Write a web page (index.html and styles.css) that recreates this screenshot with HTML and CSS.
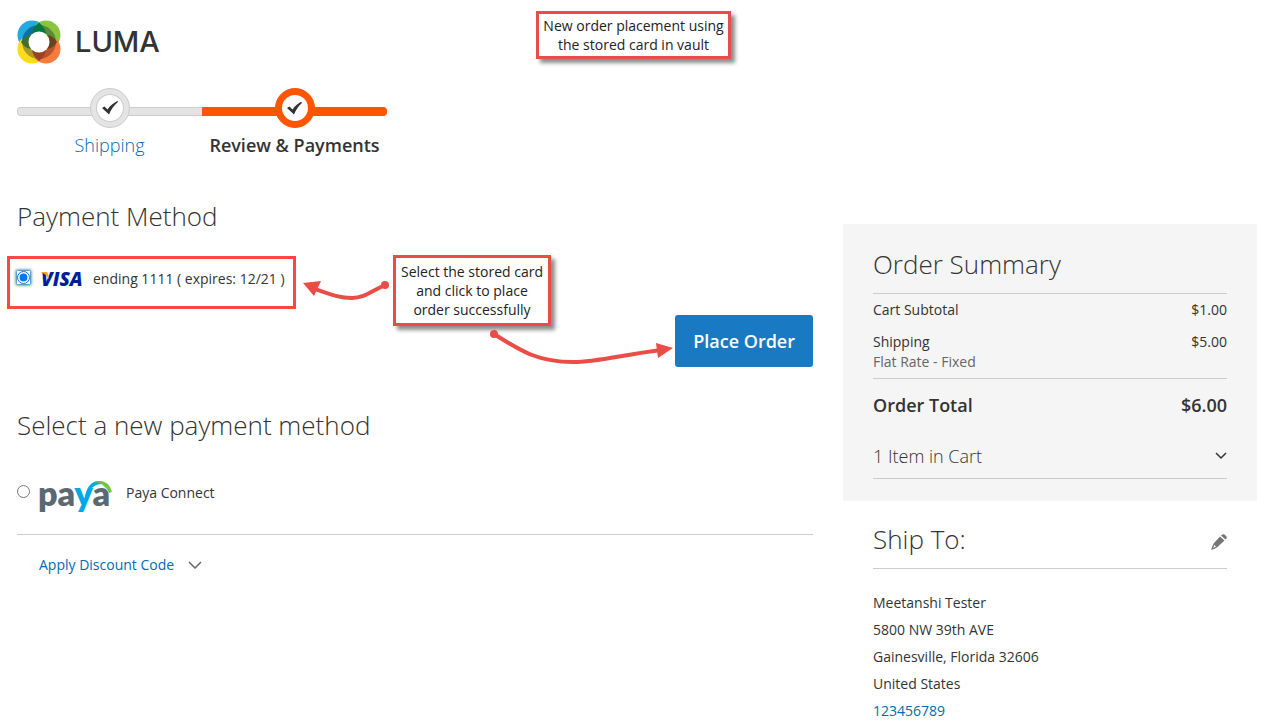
FILE: index.html
```
<!DOCTYPE html>
<html lang="en">
<head>
    <meta charset="UTF-8">
    <meta name="viewport" content="width=device-width, initial-scale=1.0">
    <title>Checkout</title>
    <link rel="stylesheet" href="styles.css">
</head>
<body>
    <header class="header">
        <a class="logo" href="#">
            <svg width="44" height="44" viewBox="0 0 44 44" aria-hidden="true">
                <circle cx="15" cy="15" r="14.5" fill="#26a9e0"/>
                <circle cx="29" cy="15" r="14.5" fill="#8bc540"/>
                <circle cx="15" cy="29" r="14.5" fill="#fedc14"/>
                <circle cx="29" cy="29" r="14.5" fill="#f67b3e"/>
                <path d="M22 5A17 17 0 0 0 5 22H22z" fill="#0c71a0"/>
                <path d="M22 5A17 17 0 0 1 39 22H22z" fill="#5b8a3b"/>
                <path d="M22 39A17 17 0 0 1 5 22H22z" fill="#a99a2e"/>
                <path d="M22 39A17 17 0 0 0 39 22H22z" fill="#b9552e"/>
                <path d="M22 2.500Q29 8 29 16H15Q15 8 22 2.500z" fill="#007a3e"/>
                <path d="M4 22Q8 15 15 15V29Q8 29 4 22z" fill="#42702f"/>
                <path d="M40 22Q36 15 29 15V29Q36 29 40 22z" fill="#65451f"/>
                <path d="M22 41Q29 36 29 28H15Q15 36 22 41z" fill="#9b4225"/>
                <circle cx="22" cy="22" r="10.500" fill="#fff"/>
            </svg>
            <span class="logo-text">LUMA</span>
        </a>
        <p class="callout callout-title">New order placement using<br>the stored card in vault</p>
    </header>

    <ol class="progress">
        <li class="step">
            <span class="step-mark">
                <svg width="18" height="16" viewBox="0 0 18 16" aria-hidden="true"><path d="M1 8L3.500 6.500L6.500 9.500Q10 4 16.500 1L17 2Q11 7 8 14.500z" fill="#333"/></svg>
            </span>
            <a href="#">Shipping</a>
        </li>
        <li class="step active">
            <span class="step-mark">
                <svg width="18" height="16" viewBox="0 0 18 16" aria-hidden="true"><path d="M1 8L3.500 6.500L6.500 9.500Q10 4 16.500 1L17 2Q11 7 8 14.500z" fill="#333"/></svg>
            </span>
            <span>Review &amp; Payments</span>
        </li>
    </ol>

    <div class="checkout">
        <main class="payment">
            <h2>Payment Method</h2>
            <div class="method stored">
                <input type="radio" id="stored" name="payment" checked>
                <label for="stored">
                    <span class="visa">VISA
                        <svg width="10" height="7" viewBox="0 0 10 7" aria-hidden="true"><path d="M0 0H6Q8 0 8 2L9 7Q5 1 0 0z" fill="#f7a51c"/></svg>
                    </span>
                    <span>ending 1111 ( expires: 12/21 )</span>
                </label>
                <span class="highlight"></span>

                <!-- Arrow from the note to the stored card -->
                <svg class="arrow arrow-card" width="90" height="30" viewBox="0 0 90 30" aria-hidden="true">
                    <path d="M10 10C30 17 38 20 50 20S68 14 83 7" fill="none" stroke="#eb4c46" stroke-width="4"/>
                    <path d="M1 5L19 3L12 18z" fill="#eb4c46"/>
                    <circle cx="83" cy="7" r="4" fill="#eb4c46"/>
                </svg>
                <p class="callout callout-card">Select the stored card<br>and click to place<br>order successfully</p>
                <!-- Arrow from the note to the order button -->
                <svg class="arrow arrow-button" width="186" height="40" viewBox="0 0 186 40" aria-hidden="true">
                    <path d="M5 6C33 24 50 34 84 34C108 34 132 27 172 22" fill="none" stroke="#eb4c46" stroke-width="4"/>
                    <path d="M184 20L167 15L169 30z" fill="#eb4c46"/>
                    <circle cx="5" cy="6" r="4" fill="#eb4c46"/>
                </svg>
            </div>
            <div class="actions">
                <button type="button" class="place-order">Place Order</button>
            </div>

            <h2>Select a new payment method</h2>
            <div class="method new-method">
                <input type="radio" id="paya" name="payment">
                <label for="paya">
                    <svg class="paya" width="76" height="40" viewBox="0 0 76 40" role="img" aria-label="paya">
                        <text x="0" y="33" fill="#5a6872">pa<tspan fill="#00a8e6">y</tspan>a</text>
                        <path d="M46 30Q48 9 60 8Q66 8 69 12Q60 9 54 15Q50 21 48 30z" fill="#00a8e6"/>
                        <path d="M56 9Q70 5 74 19L71 20Q67 10 56 9z" fill="#77c143"/>
                    </svg>
                    <span>Paya Connect</span>
                </label>
            </div>
            <a class="discount" href="#">
                Apply Discount Code
                <svg width="14" height="8" viewBox="0 0 14 8" aria-hidden="true"><path d="M1 1L7 7L13 1" fill="none" stroke="#666" stroke-width="1.500"/></svg>
            </a>
        </main>

        <aside class="sidebar">
            <section class="summary">
                <h2>Order Summary</h2>
                <table class="totals">
                    <tr>
                        <th>Cart Subtotal</th>
                        <td>$1.00</td>
                    </tr>
                    <tr class="shipping">
                        <th>Shipping<small>Flat Rate - Fixed</small></th>
                        <td>$5.00</td>
                    </tr>
                    <tr class="grand">
                        <th>Order Total</th>
                        <td>$6.00</td>
                    </tr>
                </table>
                <button type="button" class="cart-items">
                    1 Item in Cart
                    <svg width="12" height="8" viewBox="0 0 12 8" aria-hidden="true"><path d="M1 1L6 6L11 1" fill="none" stroke="#333" stroke-width="1.500"/></svg>
                </button>
            </section>

            <section class="ship-to">
                <div class="ship-title">
                    <h2>Ship To:</h2>
                    <button type="button" class="edit" aria-label="Edit">
                        <svg width="16" height="16" viewBox="0 0 16 16" aria-hidden="true"><path fill="#757575" fill-rule="evenodd" d="M9 2.500L13.500 6.500L6.500 13Q4 15 0 16Q1 12 3 9zM2 14L5 12.500L3.500 11zM10 1.500L11.500.5Q12.500 0 13.500 .5L15.500 2.500Q16 3.500 15.500 4.500L14.500 5.500z"/></svg>
                    </button>
                </div>
                <address>
                    Meetanshi Tester<br>
                    5800 NW 39th AVE<br>
                    Gainesville, Florida 32606<br>
                    United States<br>
                    <a href="#">123456789</a>
                </address>
            </section>
        </aside>
    </div>
</body>
</html>
```
FILE: styles.css
```
/* Basic reset */
*,
*::before {
    margin: 0;
    padding: 0;
    box-sizing: border-box;
}

body {
    font-family: "Open Sans", Arial, sans-serif;
    font-size: 14px;
    line-height: 20px;
    color: #333;
    background-color: #fff;
    padding: 20px 10px 0 17px;
}

a {
    color: #006bb4;
    text-decoration: none;
}

h2 {
    font-size: 26px;
    font-weight: 300;
    line-height: 36px;
}

button {
    font-family: inherit;
    border: none;
    background: none;
    cursor: pointer;
}

svg {
    display: block;
}

/* Header */
.header {
    position: relative;
}

.logo {
    display: inline-flex;
    align-items: center;
    gap: 14px;
    height: 44px;
    vertical-align: top;
    color: #333;
}

.logo-text {
    font-family: Inter, sans-serif;
    font-size: 29px;
    font-weight: 500;
    line-height: 42px;
}

/* Notes drawn over the page */
.callout {
    position: absolute;
    padding: 2px;
    border: 3px solid #eb4c46;
    background-color: #fff;
    box-shadow: 4px 4px 4px rgba(0, 0, 0, 0.45);
    color: #222;
    line-height: 19px;
    text-align: center;
    white-space: nowrap;
}

.callout-title {
    top: -9px;
    left: 519px;
    width: 195px;
}

.callout-card {
    top: -11px;
    left: 376px;
    width: 158px;
    padding: 4px 0;
}

.arrow {
    position: absolute;
}

.arrow-card {
    top: 12px;
    left: 285px;
}

.arrow-button {
    top: 62px;
    left: 472px;
}

.highlight {
    position: absolute;
    top: -10px;
    left: -10px;
    width: 289px;
    height: 53px;
    border: 3px solid #ff4545;
    pointer-events: none;
}

/* Checkout steps */
.progress {
    display: flex;
    margin-top: 24px;
    list-style: none;
    font-size: 18px;
}

.step {
    position: relative;
    display: flex;
    flex-direction: column;
    align-items: center;
    gap: 4px;
    width: 185px;
    line-height: 26px;
    font-weight: 300;
}

.step::before {
    content: "";
    position: absolute;
    top: 19px;
    left: 0;
    width: 100%;
    height: 9px;
    border: 1px solid #ccc;
    border-right: none;
    border-radius: 4px 0 0 4px;
    background-color: #e4e4e4;
}

.step-mark {
    position: relative;
    display: flex;
    align-items: center;
    justify-content: center;
    width: 40px;
    height: 40px;
    border: 1px solid #ccc;
    border-radius: 50%;
    background-color: #fff;
    box-shadow: inset 0 0 0 5px #e4e4e4, inset 0 0 0 6px #ccc;
}

.active {
    font-weight: 600;
}

.active::before {
    border-color: #ff5501;
    border-radius: 0 4px 4px 0;
    background-color: #ff5501;
}

.active .step-mark {
    border-color: #ff5501;
    background-color: #ff5501;
    box-shadow: none;
}

.active .step-mark svg {
    box-sizing: content-box;
    padding: 5px 4px;
    border-radius: 50%;
    background-color: #fff;
}

/* Two columns */
.checkout {
    display: grid;
    grid-template-columns: minmax(0, 1fr) 414px;
    column-gap: 30px;
    align-items: start;
    margin-top: 40px;
}

/* Payment column */
.method {
    position: relative;
    display: flex;
    align-items: center;
    gap: 8px;
}

.method label {
    display: flex;
    align-items: center;
    gap: 12px;
}

.method input {
    width: 13px;
    height: 13px;
    margin-bottom: 3px;
}

.stored {
    height: 26px;
    margin-top: 32px;
}

.stored input {
    box-shadow: 0 0 3px 1px #00699d;
}

.stored label {
    padding-left: 3px;
}

.visa {
    position: relative;
    width: 40px;
    color: #001e9c;
    font-size: 19px;
    font-style: italic;
    font-weight: 800;
    line-height: 22px;
}

.visa svg {
    position: absolute;
    top: 4px;
    left: -1px;
}

.actions {
    display: flex;
    justify-content: flex-end;
    margin: 23px 0 40px;
}

.place-order {
    padding: 13px 18px;
    border-radius: 3px;
    background-color: #1979c3;
    color: #fff;
    font-size: 18px;
    font-weight: 600;
    line-height: 26px;
}

.new-method {
    padding: 30px 0 21px;
    border-bottom: 1px solid #ccc;
}

.paya {
    overflow: visible;
    font-family: Lato, sans-serif;
    font-size: 34px;
    font-weight: 800;
}

.discount {
    display: inline-flex;
    align-items: center;
    gap: 14px;
    margin: 20px 22px;
}

/* Order summary */
.sidebar {
    padding-top: 26px;
}

.summary {
    padding: 22px 30px;
    background-color: #f5f5f5;
}

.summary h2 {
    padding-bottom: 11px;
    border-bottom: 1px solid #ccc;
}

.totals {
    width: 100%;
    border-collapse: collapse;
}

.totals th {
    padding: 6px 0;
    font-weight: 400;
    text-align: left;
}

.totals td {
    padding: 6px 0;
    text-align: right;
    vertical-align: top;
}

.totals small {
    display: block;
    color: #666;
    font-size: 14px;
}

.totals .grand th,
.totals .grand td {
    padding: 13px 0 15px;
    border-top: 1px solid #ccc;
    font-size: 18px;
    font-weight: 600;
    line-height: 26px;
}

.cart-items {
    display: flex;
    align-items: center;
    justify-content: space-between;
    width: 100%;
    padding: 10px 0 9px;
    border-bottom: 1px solid #ccc;
    color: #333;
    font-size: 18px;
    font-weight: 300;
    line-height: 26px;
    text-align: left;
}

/* Shipping address */
.ship-to {
    padding: 20px 30px 0;
}

.ship-title {
    display: flex;
    align-items: center;
    justify-content: space-between;
    padding-bottom: 11px;
    border-bottom: 1px solid #ccc;
}

.edit {
    padding-top: 5px;
}

address {
    padding-top: 20px;
    font-style: normal;
    line-height: 27px;
}
```
